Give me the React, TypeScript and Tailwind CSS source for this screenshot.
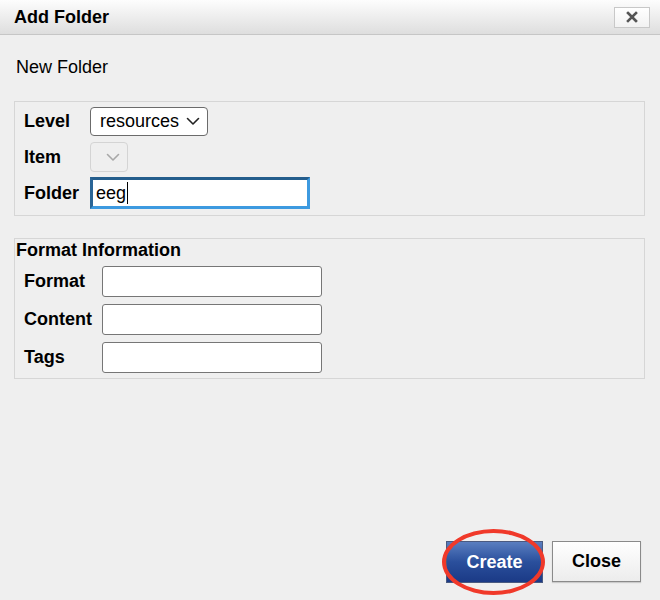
import React from "react";

function Chevron({ color = "#222" }: { color?: string }) {
  return (
    <svg width="14" height="9" viewBox="0 0 14 9" fill="none">
      <path d="M1.5 1.5 L7 7 L12.5 1.5" stroke={color} strokeWidth="1.6" strokeLinecap="round" strokeLinejoin="round" />
    </svg>
  );
}

function TextBox() {
  return <div className="w-[220px] h-[31px] bg-white border border-[#767676] rounded-[3px]" />;
}

export default function App() {
  return (
    <div
      className="w-[660px] h-[600px] bg-[#efefef] flex flex-col text-black overflow-hidden"
      style={{ fontFamily: '"Liberation Sans", Arial, sans-serif' }}
    >
      {/* Header */}
      <div className="h-[35px] shrink-0 flex items-center justify-between pl-[14px] pr-[10px] border-b border-[#c6c6c6] bg-gradient-to-b from-[#fdfdfd] to-[#dedede]">
        <div className="text-[18px] font-bold leading-none">Add Folder</div>
        <div className="w-[36px] h-[21px] bg-gradient-to-b from-white to-[#f2f2f2] border border-[#c8c8c8] flex items-center justify-center">
          <svg width="12" height="12" viewBox="0 0 12 12">
            <path d="M2 2 L10 10 M10 2 L2 10" stroke="#555" strokeWidth="2.6" strokeLinecap="square" />
          </svg>
        </div>
      </div>

      {/* Body */}
      <div className="flex-1 flex flex-col px-[14px] pr-[15px]">
        <div className="mt-[22px] ml-[2px] text-[18px] leading-[20px]">New Folder</div>

        {/* Fieldset 1 */}
        <div className="mt-[24px] border border-[#d6d6d6] pt-[4px] pb-[6px] pl-[9px] flex flex-col">
          <div className="flex items-center h-[30px]">
            <div className="w-[66px] text-[18px] font-bold">Level</div>
            <div className="w-[118px] h-[29px] bg-white border border-[#6b6b6b] rounded-[4px] flex items-center justify-between pl-[9px] pr-[7px]">
              <span className="text-[18px]">resources</span>
              <Chevron />
            </div>
          </div>
          <div className="flex items-center h-[30px] mt-[6px]">
            <div className="w-[66px] text-[18px] font-bold">Item</div>
            <div className="w-[38px] h-[30px] bg-[#efefef] border border-[#d4d4d4] rounded-[4px] flex items-center justify-end pr-[7px]">
              <Chevron color="#a8a8a8" />
            </div>
          </div>
          <div className="flex items-center h-[32px] mt-[5px]">
            <div className="w-[66px] text-[18px] font-bold">Folder</div>
            <div className="w-[220px] h-[32px] bg-white border-[3px] border-t-[#245d8c] border-l-[#2a6596] border-r-[#3d9ae0] border-b-[#3d9ae0] flex items-center pl-[3px]">
              <span className="text-[18px] leading-none">eeg</span>
              <span className="w-[1px] h-[22px] bg-black ml-[1px]" />
            </div>
          </div>
        </div>

        {/* Fieldset 2 */}
        <div className="mt-[22px] border border-[#d6d6d6] pt-[1px] pb-[5px] flex flex-col">
          <div className="pl-[1px] text-[18px] font-bold leading-[21px]">Format Information</div>
          <div className="pl-[9px] flex flex-col gap-[7px] mt-[5px]">
            <div className="flex items-center">
              <div className="w-[78px] text-[18px] font-bold">Format</div>
              <TextBox />
            </div>
            <div className="flex items-center">
              <div className="w-[78px] text-[18px] font-bold">Content</div>
              <TextBox />
            </div>
            <div className="flex items-center">
              <div className="w-[78px] text-[18px] font-bold">Tags</div>
              <TextBox />
            </div>
          </div>
        </div>

        {/* Footer */}
        <div className="mt-auto flex justify-end items-start gap-[9px] pr-[4px] pb-[17px]">
          <div className="relative">
            <div className="w-[97px] h-[42px] flex items-center justify-center border border-[#4a5a80] bg-gradient-to-b from-[#5a7ec0] via-[#2a4f9c] to-[#1b3a86] text-white text-[18px] font-bold">
              Create
            </div>
            <div className="absolute left-[-4px] top-[-12px] w-[103px] h-[66px] rounded-[50%] border-[4px] border-[#f0392a]" />
          </div>
          <div className="w-[89px] h-[41px] flex items-center justify-center border border-[#8a8a8a] bg-gradient-to-b from-white to-[#ececec] text-[18px] font-bold shadow-[0_1px_1px_rgba(0,0,0,0.15)]">
            Close
          </div>
        </div>
      </div>
    </div>
  );
}
